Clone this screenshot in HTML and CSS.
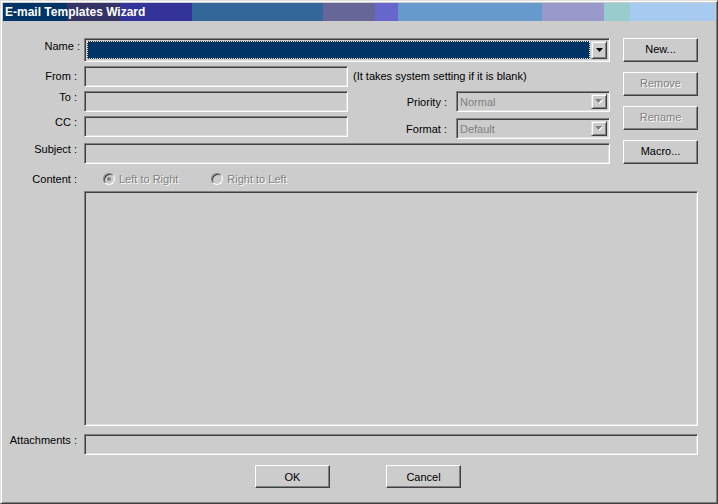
FILE: index.html
```html
<!DOCTYPE html>
<html lang="en">
<head>
    <meta charset="UTF-8">
    <title>E-mail Templates Wizard</title>
    <link rel="stylesheet" href="styles.css">
</head>
<body>
    <div class="window">
        <div class="titlebar">E-mail Templates Wizard</div>

        <div class="dialog">
            <div class="top">
                <div class="fields">
                    <div class="row row-name">
                        <label class="lbl lbl-name">Name :</label>
                        <div class="combo">
                            <div class="combo-value"></div>
                            <span class="drop-btn">
                                <svg width="7" height="4" viewBox="0 0 7 4"><polygon points="0,0 7,0 3.5,4" fill="#000"/></svg>
                            </span>
                        </div>
                    </div>

                    <div class="mid">
                        <div class="mid-left">
                            <div class="row">
                                <label class="lbl lbl-from">From :</label>
                                <div class="edit edit-short"></div>
                            </div>
                            <div class="row">
                                <label class="lbl">To :</label>
                                <div class="edit edit-short"></div>
                            </div>
                            <div class="row">
                                <label class="lbl">CC :</label>
                                <div class="edit edit-short edit-cc"></div>
                            </div>
                        </div>
                        <div class="mid-right">
                            <div class="note">(It takes system setting if it is blank)</div>
                            <div class="opt-row">
                                <span class="opt-lbl">Priority :</span>
                                <div class="select">
                                    <span class="select-value">Normal</span>
                                    <span class="drop-btn">
                                        <svg width="8" height="5" viewBox="0 0 8 5"><polygon points="1,1 8,1 4.5,5" fill="#fff"/><polygon points="0,0 7,0 3.5,4" fill="#808080"/></svg>
                                    </span>
                                </div>
                            </div>
                            <div class="opt-row opt-format">
                                <span class="opt-lbl">Format :</span>
                                <div class="select">
                                    <span class="select-value">Default</span>
                                    <span class="drop-btn">
                                        <svg width="8" height="5" viewBox="0 0 8 5"><polygon points="1,1 8,1 4.5,5" fill="#fff"/><polygon points="0,0 7,0 3.5,4" fill="#808080"/></svg>
                                    </span>
                                </div>
                            </div>
                        </div>
                    </div>

                    <div class="row row-subject">
                        <label class="lbl">Subject :</label>
                        <div class="edit edit-subject"></div>
                    </div>
                </div>

                <div class="side-buttons">
                    <button class="btn">New...</button>
                    <button class="btn" disabled>Remove</button>
                    <button class="btn" disabled>Rename</button>
                    <button class="btn">Macro...</button>
                </div>
            </div>

            <div class="row row-content">
                <label class="lbl">Content :</label>
                <div class="radios">
                    <span class="radio checked"><span class="dot"></span></span>
                    <span class="radio-text">Left to Right</span>
                    <span class="radio radio-second"></span>
                    <span class="radio-text">Right to Left</span>
                </div>
            </div>

            <div class="row row-memo">
                <div class="memo"></div>
            </div>

            <div class="row row-attach">
                <label class="lbl">Attachments :</label>
                <div class="edit edit-wide"></div>
            </div>

            <div class="footer">
                <button class="btn btn-footer">OK</button>
                <button class="btn btn-footer">Cancel</button>
            </div>
        </div>
    </div>
</body>
</html>
```

FILE: styles.css
```css
* {
    margin: 0;
    padding: 0;
    box-sizing: border-box;
}

body {
    background: #cccccc;
    font-family: 'Liberation Sans', Arial, sans-serif;
    font-size: 11px;
    color: #000;
}

.window {
    width: 718px;
    height: 504px;
    padding: 2px;
    background: #cccccc;
    border: 1px solid;
    border-color: #dfdfdf #404040 #404040 #dfdfdf;
    box-shadow: inset 1px 1px #fff, inset -1px -1px #808080;
}

.titlebar {
    height: 18px;
    padding-left: 2px;
    color: #fff;
    font-size: 12px;
    font-weight: bold;
    line-height: 18px;
    background: linear-gradient(to right,
        #003366 0 64px,
        #333366 64px 117px,
        #333399 117px 189px,
        #336699 189px 320px,
        #666699 320px 372px,
        #6666cc 372px 395px,
        #6699cc 395px 539px,
        #9999cc 539px 601px,
        #99cccc 601px 627px,
        #a6caf0 627px 712px);
}

.dialog {
    padding-top: 17px;
}

.top {
    display: flex;
    gap: 13px;
}

.fields {
    width: 607px;
}

.row {
    display: flex;
}

.lbl {
    flex: none;
    width: 81px;
    padding-right: 7px;
    text-align: right;
    line-height: 13px;
}

.lbl-name {
    padding-right: 4px;
    padding-top: 2px;
}

.lbl-from {
    padding-top: 4px;
}

/* sunken 3d frame */
.edit, .combo, .select, .memo {
    border: 1px solid;
    border-color: #808080 #fff #fff #808080;
    box-shadow: inset 1px 1px #404040, inset -1px -1px #dfdfdf;
    background: #cccccc;
}

.edit {
    height: 21px;
}

.edit-short {
    width: 264px;
}

.edit-cc {
    width: 265px;
}

.edit-subject {
    width: 526px;
}

.edit-wide {
    width: 614px;
}

.combo {
    display: flex;
    gap: 1px;
    width: 526px;
    height: 24px;
    padding: 2px;
}

.combo-value {
    flex: 1;
    background: #003366;
    border: 1px dotted #ffe4b8;
}

.drop-btn {
    display: flex;
    align-items: center;
    justify-content: center;
    width: 16px;
    border: 1px solid;
    border-color: #dfdfdf #404040 #404040 #dfdfdf;
    box-shadow: inset 1px 1px #fff, inset -1px -1px #808080;
    background: #cccccc;
}

.mid {
    display: flex;
    margin-top: 4px;
}

.mid-left {
    display: flex;
    flex-direction: column;
    gap: 4px;
    width: 345px;
}

.mid-right {
    width: 262px;
    padding-left: 5px;
}

.note {
    height: 21px;
    line-height: 21px;
}

.opt-row {
    display: flex;
    align-items: center;
    justify-content: flex-end;
    gap: 9px;
    margin-top: 4px;
}

.opt-format {
    margin-top: 6px;
}

.select {
    display: flex;
    width: 154px;
    height: 21px;
    padding: 2px;
}

.select-value {
    flex: 1;
    padding-left: 1px;
    color: #808080;
    line-height: 17px;
}

.row-subject {
    margin-top: 4px;
}

.side-buttons {
    display: flex;
    flex-direction: column;
    gap: 10px;
}

.btn {
    width: 75px;
    height: 24px;
    padding-bottom: 2px;
    font-family: inherit;
    font-size: 11px;
    color: #000;
    background: #cccccc;
    border: 1px solid;
    border-color: #fff #404040 #404040 #fff;
    box-shadow: inset -1px -1px #808080;
}

.btn:disabled {
    color: #808080;
    text-shadow: 1px 1px 0 #fff;
}

.row-content {
    align-items: center;
    height: 18px;
    margin-top: 6px;
}

.radios {
    display: flex;
    align-items: center;
    padding-left: 19px;
    color: #808080;
    text-shadow: 1px 1px 0 #fff;
}

.radio {
    display: flex;
    align-items: center;
    justify-content: center;
    width: 12px;
    height: 12px;
    margin-right: 4px;
    border-radius: 50%;
    border: 1px solid;
    border-color: #808080 #fff #fff #808080;
    box-shadow: inset 1px 1px #404040;
    background: #cccccc;
}

.radio-second {
    margin-left: 33px;
}

.dot {
    width: 4px;
    height: 4px;
    border-radius: 50%;
    background: #808080;
}

.row-memo {
    margin-top: 3px;
    padding-left: 81px;
}

.memo {
    width: 614px;
    height: 235px;
}

.row-attach {
    margin-top: 8px;
}

.footer {
    display: flex;
    gap: 56px;
    margin-top: 10px;
    padding-left: 252px;
}

.btn-footer {
    height: 23px;
    padding-bottom: 0;
}
```
